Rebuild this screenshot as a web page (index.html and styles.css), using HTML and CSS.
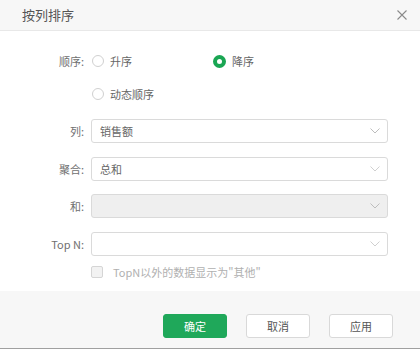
FILE: index.html
```html
<!DOCTYPE html>
<html lang="zh">
<head>
<meta charset="utf-8">
<link rel="stylesheet" href="styles.css">
</head>
<body>
<div class="dialog">
  <div class="header">
    <span class="title">按列排序</span>
    <svg class="close" width="12" height="12" viewBox="0 0 12 12"><path d="M1.5 1.5 L10.5 10.5 M10.5 1.5 L1.5 10.5" stroke="#8a8a8a" stroke-width="1.1" fill="none"/></svg>
  </div>
  <div class="content">
    <div class="row r1">
      <label class="lbl">顺序:</label>
      <div class="opts">
        <span class="opt first"><span class="radio"></span>升序</span>
        <span class="opt"><span class="radio on"></span>降序</span>
      </div>
    </div>
    <div class="row r2">
      <span class="lbl"></span>
      <span class="opt"><span class="radio"></span>动态顺序</span>
    </div>
    <div class="row r3">
      <label class="lbl">列:</label>
      <div class="select"><span class="val">销售额</span><svg class="chev" width="10" height="6" viewBox="0 0 10 6"><path d="M0.5 0.5 L5 5 L9.5 0.5" stroke="#bdbdbd" stroke-width="1" fill="none"/></svg></div>
    </div>
    <div class="row r4">
      <label class="lbl">聚合:</label>
      <div class="select"><span class="val">总和</span><svg class="chev" width="10" height="6" viewBox="0 0 10 6"><path d="M0.5 0.5 L5 5 L9.5 0.5" stroke="#d0d0d0" stroke-width="1" fill="none"/></svg></div>
    </div>
    <div class="row r5">
      <label class="lbl">和:</label>
      <div class="select disabled"><span class="val"></span><svg class="chev" width="10" height="6" viewBox="0 0 10 6"><path d="M0.5 0.5 L5 5 L9.5 0.5" stroke="#bdbdbd" stroke-width="1" fill="none"/></svg></div>
    </div>
    <div class="row r6">
      <label class="lbl">Top N:</label>
      <div class="select"><span class="val"></span><svg class="chev" width="10" height="6" viewBox="0 0 10 6"><path d="M0.5 0.5 L5 5 L9.5 0.5" stroke="#d0d0d0" stroke-width="1" fill="none"/></svg></div>
    </div>
    <div class="row r7">
      <span class="lbl"></span>
      <span class="check-opt"><span class="checkbox"></span>TopN以外的数据显示为"其他"</span>
    </div>
  </div>
  <div class="footer">
    <button class="btn primary">确定</button>
    <button class="btn">取消</button>
    <button class="btn">应用</button>
  </div>
</div>
</body>
</html>
```
FILE: styles.css
```css
html, body {
  margin: 0;
  padding: 0;
  background: #fff;
}
body {
  font-family: "Noto Sans CJK SC", "Noto Sans", sans-serif;
  font-size: 11px;
  color: #666;
}
.dialog {
  width: 420px;
  height: 349px;
  display: flex;
  flex-direction: column;
}
.header {
  height: 30px;
  background: #f7f7f7;
  border-bottom: 1px solid #e8e8e8;
  display: flex;
  align-items: center;
  justify-content: space-between;
  padding: 0 12px 0 22px;
}
.title {
  font-size: 13px;
  color: #555;
  line-height: 30px;
}
.close {
  display: block;
}
.content {
  flex: 1;
  padding-top: 18px;
}
.row {
  display: flex;
  align-items: center;
  height: 24px;
}
.r2 { margin-top: 9px; }
.r3 { margin-top: 13px; }
.r4 { margin-top: 14px; }
.r5 { margin-top: 13px; }
.r6 { margin-top: 14px; }
.r7 { margin-top: 4px; }
.lbl {
  width: 91px;
  text-align: right;
  padding-right: 7px;
  box-sizing: border-box;
  color: #707070;
  flex: none;
}
.opts {
  display: flex;
}
.opt {
  display: flex;
  align-items: center;
  color: #666;
}
.opt.first {
  width: 122px;
}
.radio {
  width: 12px;
  height: 12px;
  border: 1px solid #d0d0d0;
  border-radius: 50%;
  box-sizing: border-box;
  margin-right: 6px;
  margin-left: 1px;
  background: #fff;
}
.radio.on {
  width: 13px;
  height: 13px;
  margin-left: 0;
  border: 4px solid #1aa653;
}
.select {
  width: 297px;
  height: 24px;
  box-sizing: border-box;
  border: 1px solid #dadada;
  border-radius: 3px;
  display: flex;
  align-items: center;
  justify-content: space-between;
  padding: 0 7px 0 8px;
  background: #fff;
}
.select.disabled {
  background: #efefef;
}
.val {
  color: #666;
}
.chev {
  display: block;
}
.check-opt {
  display: flex;
  align-items: center;
  color: #b0b0b0;
}
.checkbox {
  width: 12px;
  height: 12px;
  border: 1px solid #d5d5d5;
  border-radius: 2px;
  background: #f2f2f2;
  box-sizing: border-box;
  margin-right: 10px;
}
.footer {
  height: 58px;
  background: #f7f7f7;
  border-bottom: 1px solid #a0a0a0;
  display: flex;
  justify-content: flex-end;
  align-items: flex-start;
  padding: 23px 27px 0 0;
  box-sizing: border-box;
  gap: 19px;
}
.btn {
  width: 64px;
  height: 24px;
  border: 1px solid #d9d9d9;
  border-radius: 3px;
  background: #fff;
  font-family: "Noto Sans CJK SC", "Noto Sans", sans-serif;
  font-size: 11px;
  color: #555;
  padding: 0;
  margin: 0;
}
.btn.primary {
  background: #1fa85a;
  border-color: #1fa85a;
  color: #fff;
}
```
